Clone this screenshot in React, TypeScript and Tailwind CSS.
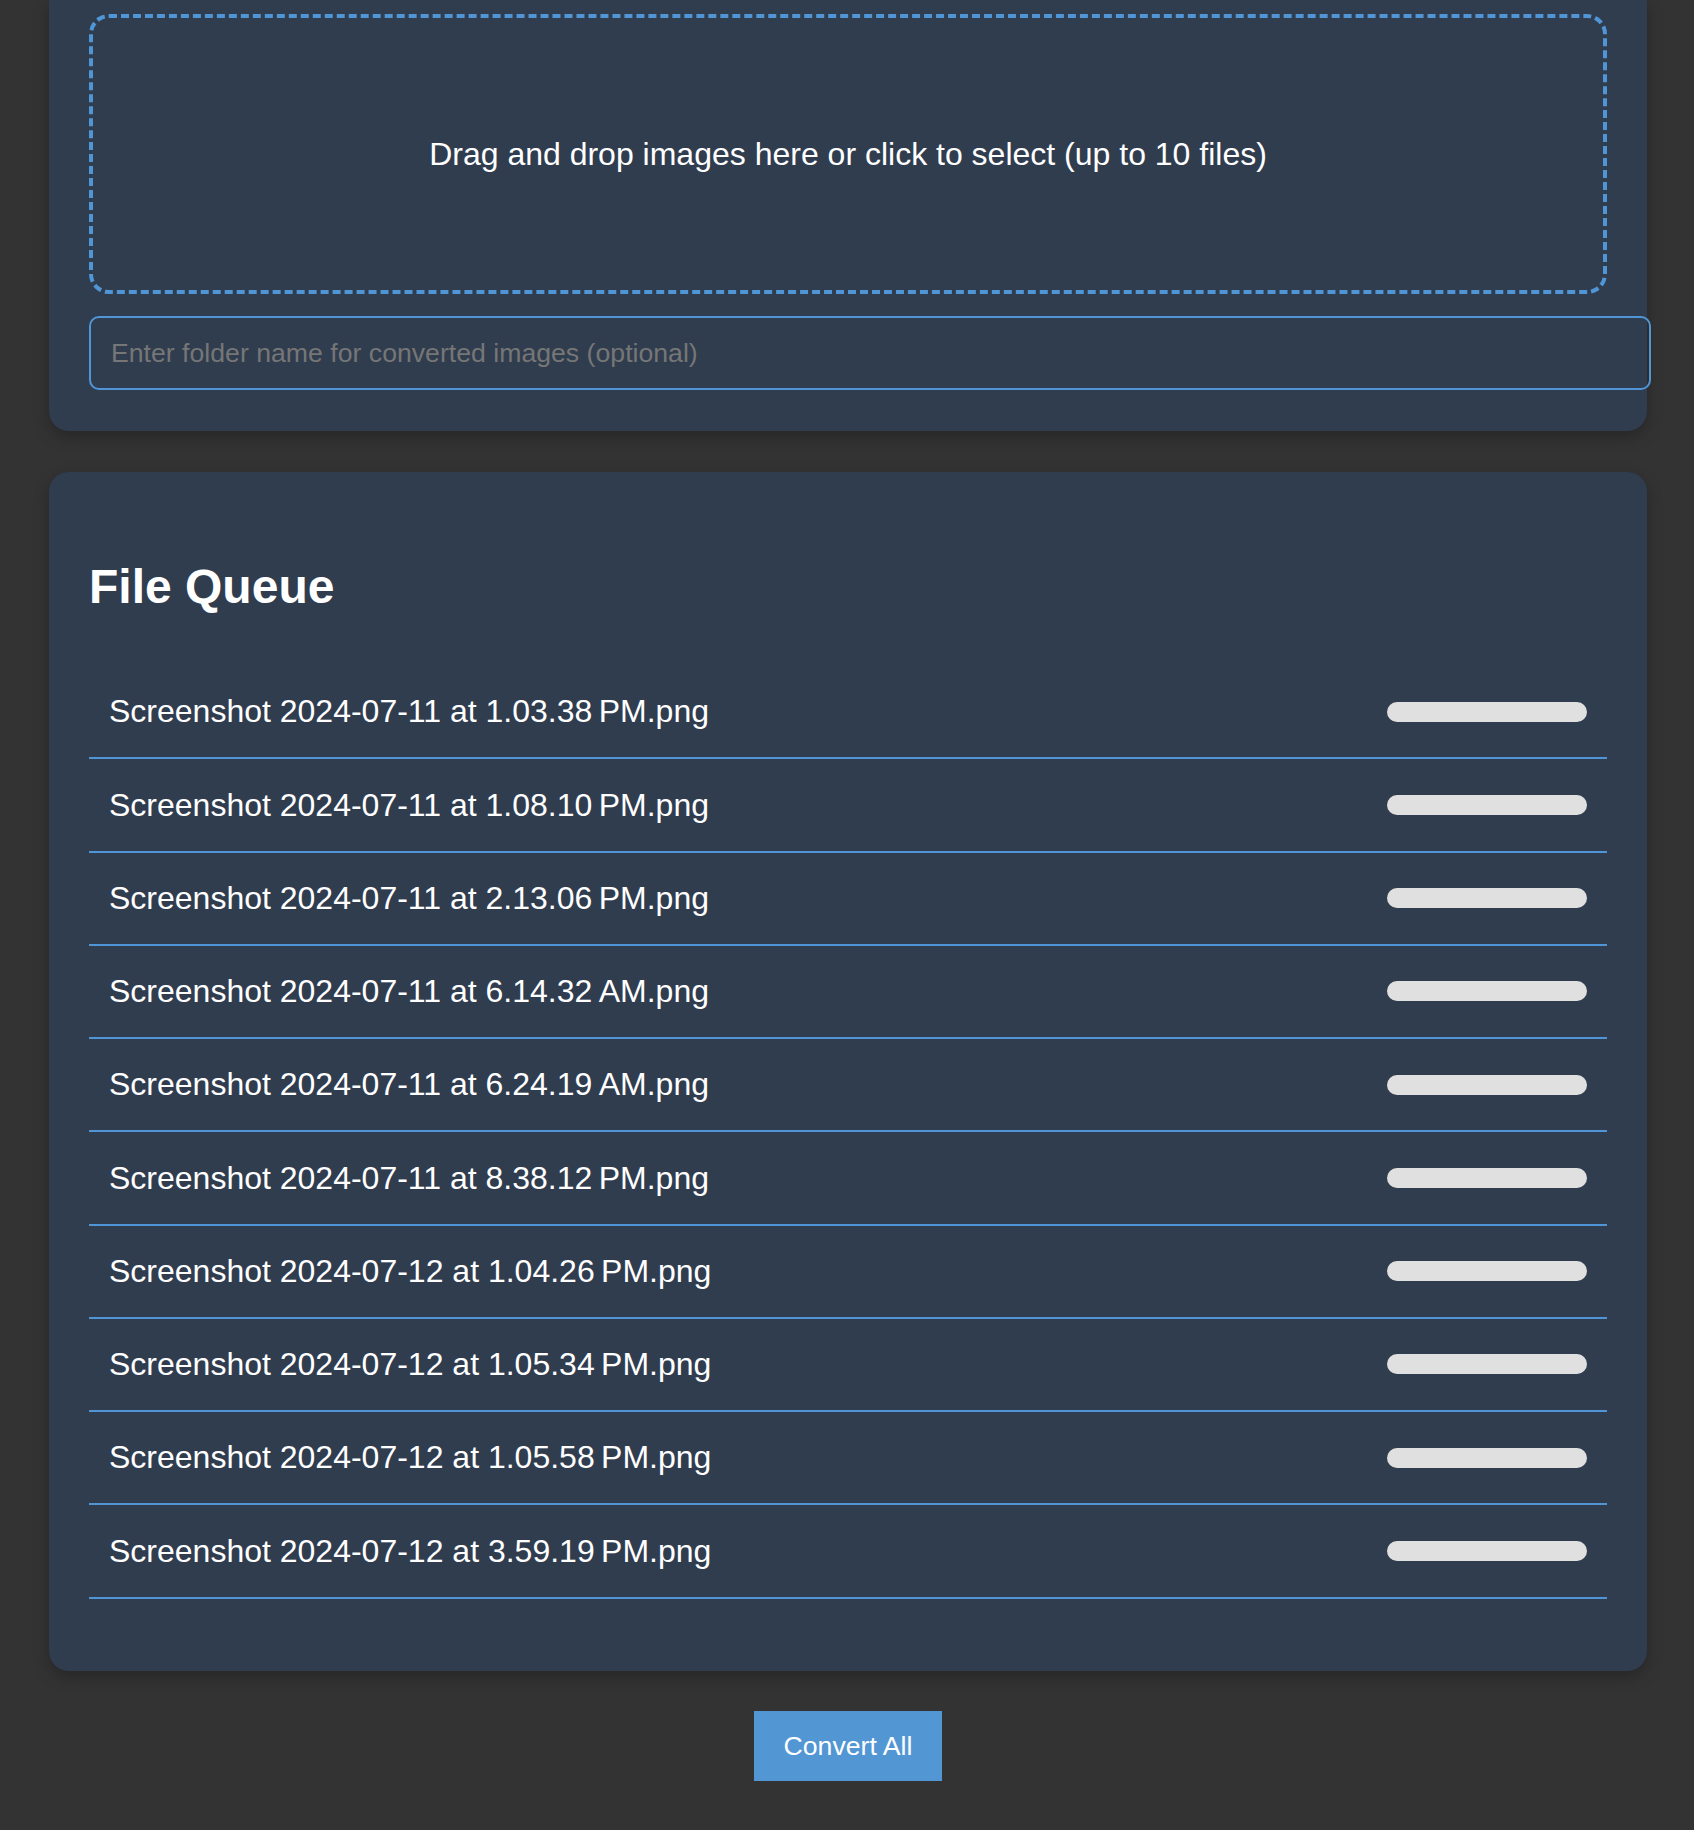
const files = [
  "Screenshot 2024-07-11 at 1.03.38\u202FPM.png",
  "Screenshot 2024-07-11 at 1.08.10\u202FPM.png",
  "Screenshot 2024-07-11 at 2.13.06\u202FPM.png",
  "Screenshot 2024-07-11 at 6.14.32\u202FAM.png",
  "Screenshot 2024-07-11 at 6.24.19\u202FAM.png",
  "Screenshot 2024-07-11 at 8.38.12\u202FPM.png",
  "Screenshot 2024-07-12 at 1.04.26\u202FPM.png",
  "Screenshot 2024-07-12 at 1.05.34\u202FPM.png",
  "Screenshot 2024-07-12 at 1.05.58\u202FPM.png",
  "Screenshot 2024-07-12 at 3.59.19\u202FPM.png",
];

function QueueRow({ name }: { name: string }) {
  return (
    <li className="flex h-[93.27px] items-center justify-between border-b-2 border-[#5096d6] px-[20px]">
      <span className="text-[32px] leading-[36.8px]">{name}</span>
      <div className="h-[20px] w-[200px] rounded-full bg-[#e0e0e0]" />
    </li>
  );
}

export default function App() {
  return (
    <div className="min-h-screen bg-[#333333] pb-[48px] font-['Liberation_Sans',Arial,sans-serif] text-white">
      <div className="ml-[49px] w-[1598px]">
        <section className="rounded-b-[20px] bg-[#303d4f] px-[40px] pt-[14px] pb-[41px] shadow-[0_6px_16px_rgba(0,0,0,0.25)]">
          <div className="flex h-[280px] items-center justify-center rounded-[20px] border-4 border-dashed border-[#5096d6]">
            <p className="text-[32px] leading-[36.8px]">
              Drag and drop images here or click to select (up to 10 files)
            </p>
          </div>
          <input
            type="text"
            placeholder="Enter folder name for converted images (optional)"
            className="mt-[22px] block h-[74px] w-[1562px] rounded-[10px] border-2 border-[#5096d6] bg-transparent px-[20px] text-[26.67px] text-white outline-none placeholder:text-[#767676]"
          />
        </section>

        <section className="mt-[41px] rounded-[20px] bg-[#303d4f] px-[40px] pt-[40px] pb-[72px] shadow-[0_6px_16px_rgba(0,0,0,0.25)]">
          <h2 className="mt-[47px] mb-[52px] text-[48px] font-bold leading-[55px]">File Queue</h2>
          <ul>
            {files.map((f) => (
              <QueueRow key={f} name={f} />
            ))}
          </ul>
        </section>

        <div className="mt-[40px] flex justify-center">
          <button className="bg-[#5296d4] px-[30px] py-[20px] text-[26.67px] leading-[30.67px] text-white">
            Convert All
          </button>
        </div>
      </div>
    </div>
  );
}
